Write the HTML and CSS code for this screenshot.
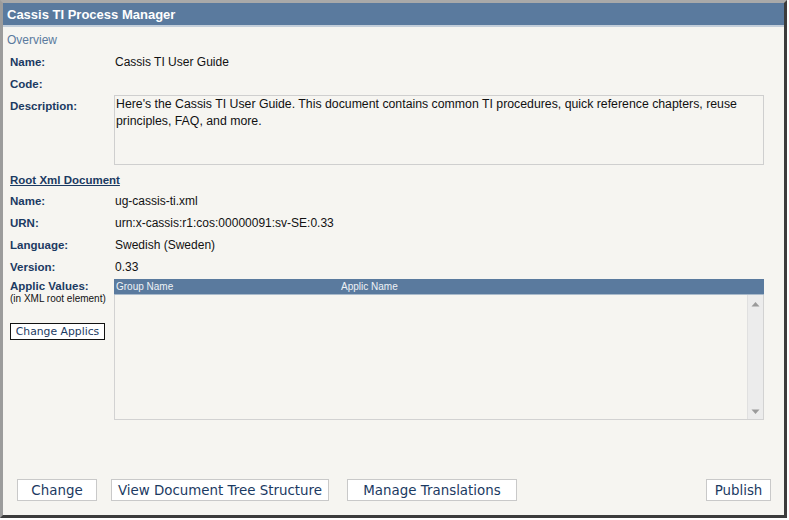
FILE: index.html
```html
<!DOCTYPE html>
<html>
<head>
<meta charset="utf-8">
<link rel="stylesheet" href="styles.css">
</head>
<body>
<div class="window">
  <div class="titlebar">Cassis TI Process Manager</div>
  <div class="content">
    <div class="section-title">Overview</div>
    <div class="row"><div class="label">Name:</div><div class="value">Cassis TI User Guide</div></div>
    <div class="row"><div class="label">Code:</div><div class="value"></div></div>
    <div class="row desc-row">
      <div class="label">Description:</div>
      <div class="textarea">Here's the Cassis TI User Guide. This document contains common TI procedures, quick reference chapters, reuse principles, FAQ, and more.</div>
    </div>
    <div class="row root-row"><div class="label link">Root Xml Document</div></div>
    <div class="row"><div class="label">Name:</div><div class="value">ug-cassis-ti.xml</div></div>
    <div class="row"><div class="label">URN:</div><div class="value">urn:x-cassis:r1:cos:00000091:sv-SE:0.33</div></div>
    <div class="row"><div class="label">Language:</div><div class="value">Swedish (Sweden)</div></div>
    <div class="row"><div class="label">Version:</div><div class="value">0.33</div></div>
    <div class="applic-row">
      <div class="applic-side">
        <div class="applic-label">Applic Values:</div>
        <div class="applic-note">(in XML root element)</div>
        <button class="small-btn">Change Applics</button>
      </div>
      <div class="grid">
        <div class="grid-head"><span class="col-group">Group Name</span><span>Applic Name</span></div>
        <div class="grid-body">
          <div class="grid-rows"></div>
          <div class="scrollbar">
            <svg class="arrow" width="9" height="6" viewBox="0 0 9 6"><path d="M0.5 5.5 L4.5 1 L8.5 5.5 Z" fill="#9a9a9a"/></svg>
            <svg class="arrow" width="9" height="6" viewBox="0 0 9 6"><path d="M0.5 0.5 L4.5 5 L8.5 0.5 Z" fill="#9a9a9a"/></svg>
          </div>
        </div>
      </div>
    </div>
    <div class="spacer"></div>
    <div class="buttons">
      <button class="btn w-change">Change</button>
      <button class="btn w-view">View Document Tree Structure</button>
      <button class="btn w-manage">Manage Translations</button>
      <button class="btn w-publish">Publish</button>
    </div>
  </div>
</div>
</body>
</html>
```
FILE: styles.css
```css
html, body {
  margin: 0;
  padding: 0;
  background: #ffffff;
}
.window {
  width: 781px;
  height: 512px;
  border-top: 3px solid #a9a9a9;
  border-left: 3px solid #9c9c9c;
  border-right: 3px solid #3c3c3c;
  border-bottom: 3px solid #3c3c3c;
  background: #f6f5f1;
  display: flex;
  flex-direction: column;
  font-family: "Liberation Sans", Arial, sans-serif;
}
.titlebar {
  height: 22px;
  line-height: 23px;
  background: #5a7a9e;
  color: #ffffff;
  font-weight: bold;
  font-size: 13px;
  padding-left: 4px;
  border-bottom: 2px solid #c3ceda;
}
.content {
  flex: 1;
  display: flex;
  flex-direction: column;
  padding: 2px 0 14px 4px;
}
.section-title {
  height: 22px;
  line-height: 22px;
  color: #5a7a9e;
  font-size: 12px;
}
.row {
  display: flex;
  height: 22px;
  line-height: 22px;
  padding-left: 3px;
}
.label {
  width: 105px;
  flex: none;
  font-size: 11.5px;
  font-weight: bold;
  color: #1b3a62;
}
.value {
  font-size: 12px;
  color: #111111;
}
.desc-row {
  height: 70px;
}
.desc-row .label {
  width: 104px;
}
.textarea {
  border: 1px solid #cfcfcf;
  background: #f6f5f1;
  font-size: 12.3px;
  line-height: 17px;
  color: #111111;
  padding: 0 1px;
  box-sizing: border-box;
  width: 650px;
  height: 70px;
}
.root-row {
  margin-top: 4px;
  height: 21px;
}
.link {
  width: auto;
  text-decoration: underline;
}
.applic-row {
  display: flex;
  padding-left: 3px;
  margin-top: 1px;
}
.applic-side {
  width: 104px;
  flex: none;
  display: flex;
  flex-direction: column;
  align-items: flex-start;
}
.applic-label {
  font-size: 11.5px;
  font-weight: bold;
  color: #1b3a62;
  line-height: 14px;
}
.applic-note {
  font-size: 10px;
  color: #111111;
  line-height: 12px;
  white-space: nowrap;
}
.small-btn {
  margin-top: 18px;
  width: 95px;
  height: 17px;
  padding: 0;
  border: 1px solid #111111;
  background: #ffffff;
  font-family: "DejaVu Sans", Verdana, sans-serif;
  font-size: 10.8px;
  color: #1b3a62;
  line-height: 15px;
}
.grid {
  width: 650px;
  display: flex;
  flex-direction: column;
}
.grid-head {
  height: 15px;
  line-height: 15px;
  background: #5a7a9e;
  color: #eef2f6;
  font-size: 10px;
  padding-left: 2px;
  display: flex;
  border-bottom: 1px solid #a9bacb;
}
.col-group {
  width: 225px;
}
.grid-body {
  height: 124px;
  display: flex;
  border: 1px solid #d2d2d2;
  border-top: none;
}
.grid-rows {
  flex: 1;
}
.scrollbar {
  width: 15px;
  background: #ececec;
  border-left: 1px solid #e0e0e0;
  display: flex;
  flex-direction: column;
  justify-content: space-between;
  align-items: center;
  padding: 6px 0 4px;
}
.spacer {
  flex: 1;
}
.buttons {
  display: flex;
  padding-left: 10px;
  padding-right: 13px;
}
.btn {
  height: 22px;
  padding: 0;
  background: #ffffff;
  border: 1px solid #c9c9c9;
  font-family: "DejaVu Sans", Verdana, sans-serif;
  font-size: 13.4px;
  color: #1b3a62;
}
.w-change { width: 80px; }
.w-view { width: 218px; margin-left: 14px; }
.w-manage { width: 170px; margin-left: 18px; }
.w-publish { width: 65px; margin-left: auto; }
```
